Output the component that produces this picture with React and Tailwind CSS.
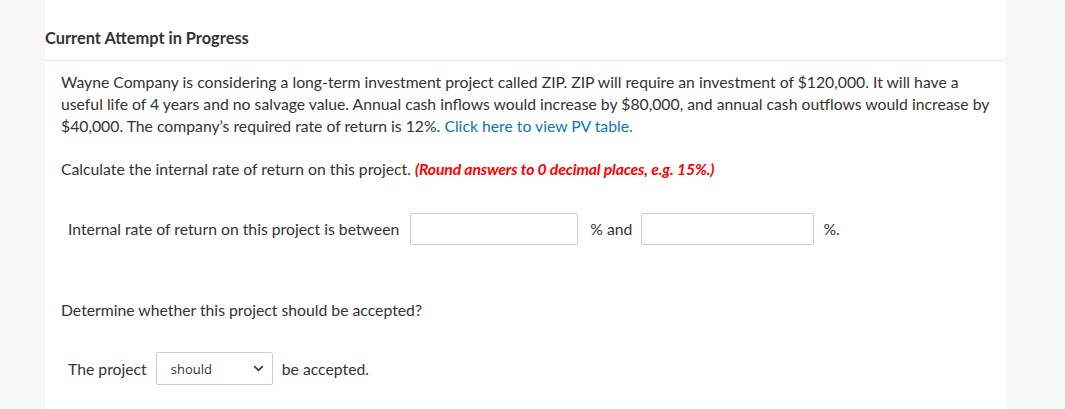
import React from 'react';
import { ChevronDown } from 'lucide-react';

export default function App() {
  return (
    <div className="w-[1065px] h-[409px] bg-[#f7f7f7] overflow-hidden" style={{ fontFamily: 'Lato, "Liberation Sans", sans-serif' }}>
      <div className="ml-[45px] w-[960px] h-full bg-white text-[#333] text-[15.75px] leading-[22px]">
        {/* HEADER */}
        <div className="pt-[27px] pb-[11px] border-b border-[#e8e8e8]">
          <h2 className="font-bold text-[16.4px] text-[#333]">Current Attempt in Progress</h2>
        </div>

        <div className="px-4 pt-[10px]">
          <p className="whitespace-nowrap">
            Wayne Company is considering a long-term investment project called ZIP. ZIP will require an investment of $120,000. It will have a<br />
            useful life of 4 years and no salvage value. Annual cash inflows would increase by $80,000, and annual cash outflows would increase by<br />
            $40,000. The company’s required rate of return is 12%. <span className="text-[#0b77b5]">Click here to view PV table.</span>
          </p>

          <p className="mt-[21px]">
            Calculate the internal rate of return on this project.{' '}
            <span className="text-[#ff0000] font-bold italic tracking-[-0.15px]">(Round answers to 0 decimal places, e.g. 15%.)</span>
          </p>

          {/* IRR ROW */}
          <div className="flex items-center mt-[33px] pl-[7px]">
            <span>Internal rate of return on this project is between</span>
            <div className="ml-[11px] w-[168px] h-[32px] border border-[#cccccc] rounded-[2px]" />
            <span className="ml-[12px]">% and</span>
            <div className="ml-[9px] w-[173px] h-[32px] border border-[#cccccc] rounded-[2px]" />
            <span className="ml-[9px]">%.</span>
          </div>

          <p className="mt-[54px]">Determine whether this project should be accepted?</p>

          {/* SELECT ROW */}
          <div className="flex items-center mt-[31px] pl-[7px]">
            <span>The project</span>
            <div className="ml-[9px] w-[117px] h-[33px] border border-[#cccccc] rounded-[2px] flex items-center justify-between pl-[14px] pr-[6px]">
              <span className="text-[13px] text-[#333]" style={{ fontFamily: '"Open Sans", "Noto Sans", sans-serif' }}>should</span>
              <ChevronDown className="w-[15px] h-[15px] text-[#333]" strokeWidth={2.5} />
            </div>
            <span className="ml-[9px]">be accepted.</span>
          </div>
        </div>
      </div>
    </div>
  );
}
